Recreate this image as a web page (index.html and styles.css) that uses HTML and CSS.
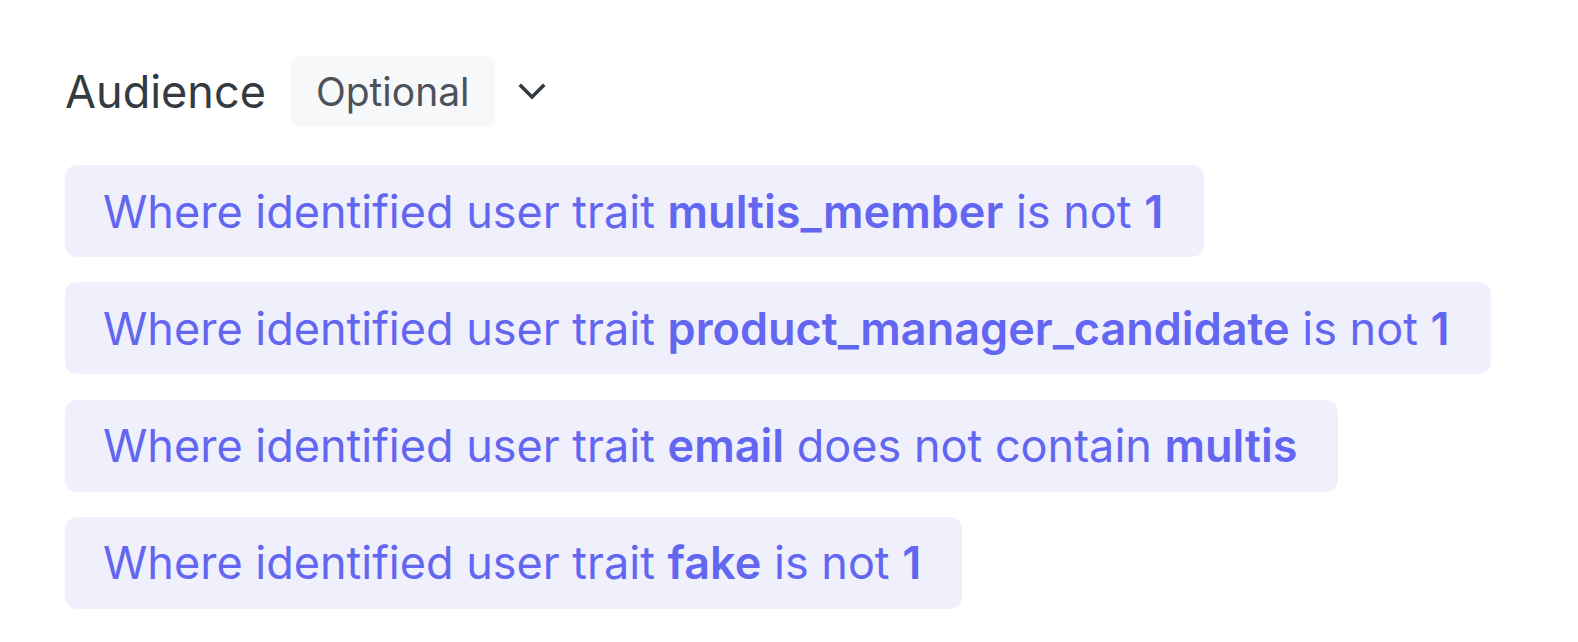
FILE: index.html
```html
<!DOCTYPE html>
<html lang="en">
<head>
<meta charset="utf-8">
<title>Audience</title>
<link rel="stylesheet" href="styles.css">
</head>
<body>
<section class="audience">
  <div class="header">
    <h2 class="title">Audience</h2>
    <span class="pill">Optional</span>
    <button class="toggle" aria-label="Collapse">
      <svg width="28" height="18" viewBox="0 0 28 18" aria-hidden="true">
        <path d="M3 3 L14 14 L25 3" fill="none" stroke="#343a40" stroke-width="3.6" stroke-linecap="square" stroke-linejoin="miter"/>
      </svg>
    </button>
  </div>
  <ul class="rules">
    <li class="rule">Where identified user trait <b>multis_member</b> is not <b>1</b></li>
    <li class="rule">Where identified user trait <b>product_manager_candidate</b> is not <b>1</b></li>
    <li class="rule">Where identified user trait <b>email</b> does not contain <b>multis</b></li>
    <li class="rule">Where identified user trait <b>fake</b> is not <b>1</b></li>
  </ul>
</section>
</body>
</html>
```

FILE: styles.css
```css
html, body {
  margin: 0;
  padding: 0;
  background: #ffffff;
}

body {
  font-family: Inter, "Noto Sans", "Liberation Sans", sans-serif;
}

.audience {
  padding: 56px 0 0 65px;
}

.header {
  display: flex;
  align-items: center;
  height: 71px;
}

.title {
  margin: 0;
  font-size: 45px;
  font-weight: 400;
  color: #343a40;
  line-height: 1;
}

.pill {
  margin-left: 25px;
  height: 71px;
  display: flex;
  align-items: center;
  padding: 0 25px 0 25px;
  background: #f7f8f9;
  border-radius: 8px;
  font-size: 39px;
  color: #4b5259;
}

.toggle {
  margin-left: 23px;
  padding: 0;
  border: 0;
  background: none;
  display: flex;
  align-items: center;
}

.rules {
  list-style: none;
  margin: 38px 0 0 0;
  padding: 0;
  display: flex;
  flex-direction: column;
  align-items: flex-start;
  gap: 25.3px;
}

.rule {
  height: 92px;
  display: flex;
  align-items: center;
  padding: 0 41px 0 38px;
  background: #eff0fc;
  border-radius: 12px;
  font-size: 45px;
  color: #6366f1;
  white-space: pre;
}

.rule b {
  font-weight: 600;
}
```
